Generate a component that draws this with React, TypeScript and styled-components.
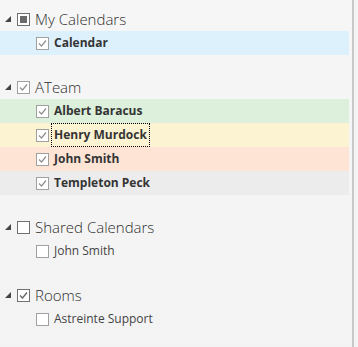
import styled, { createGlobalStyle } from 'styled-components';

type CheckState = 'checked' | 'partial' | 'empty';

interface CalendarItem {
  name: string;
  color?: string;
  bold?: boolean;
  focused?: boolean;
  state: CheckState;
}

interface CalendarGroup {
  title: string;
  state: CheckState;
  muted?: boolean;
  items: CalendarItem[];
}

const groups: CalendarGroup[] = [
  {
    title: 'My Calendars',
    state: 'partial',
    items: [{ name: 'Calendar', color: '#dcf1fc', bold: true, state: 'checked' }],
  },
  {
    title: 'ATeam',
    state: 'checked',
    muted: true,
    items: [
      { name: 'Albert Baracus', color: '#dcf0dc', bold: true, state: 'checked' },
      { name: 'Henry Murdock', color: '#fcf3d3', bold: true, focused: true, state: 'checked' },
      { name: 'John Smith', color: '#fde4d5', bold: true, state: 'checked' },
      { name: 'Templeton Peck', color: '#ececec', bold: true, state: 'checked' },
    ],
  },
  {
    title: 'Shared Calendars',
    state: 'empty',
    items: [{ name: 'John Smith', state: 'empty' }],
  },
  {
    title: 'Rooms',
    state: 'checked',
    items: [{ name: 'Astreinte Support', state: 'empty' }],
  },
];

const GlobalStyle = createGlobalStyle`
  body {
    margin: 0;
    background: #f4f4f4;
    font-family: 'Open Sans', 'Noto Sans', sans-serif;
  }
`;

const Pane = styled.div`
  width: 354px;
  height: 347px;
  box-sizing: border-box;
  border-right: 2px solid #c9c9c9;
  background: linear-gradient(#f6f6f6, #f3f3f3);
  display: flex;
  flex-direction: column;
  gap: 16px;
  padding-top: 7px;
`;

const Group = styled.div`
  display: flex;
  flex-direction: column;
  padding-bottom: 4px;
`;

const GroupHeader = styled.div`
  height: 24px;
  display: flex;
  align-items: center;
  padding-left: 5px;
`;

const Expander = styled.svg`
  width: 6px;
  height: 6px;
  margin-right: 6px;
  flex: none;
`;

const Box = styled.span<{ $muted?: boolean }>`
  width: 13px;
  height: 13px;
  box-sizing: border-box;
  border: 1px solid ${(p) => (p.$muted ? '#a0a0a0' : '#707070')};
  background: #fff;
  display: flex;
  align-items: center;
  justify-content: center;
  flex: none;
`;

const Partial = styled.span`
  width: 7px;
  height: 7px;
  background: #6a6a6a;
`;

const GroupTitle = styled.span`
  margin-left: 5px;
  font-size: 15px;
  font-weight: 300;
  color: #2e2e2e;
  white-space: nowrap;
`;

const Row = styled.div<{ $color?: string }>`
  height: 24px;
  margin-right: 3px;
  display: flex;
  align-items: center;
  padding-left: 36px;
  background: ${(p) => p.$color ?? 'transparent'};
`;

const ItemLabel = styled.span<{ $bold?: boolean; $focused?: boolean }>`
  margin-left: 2px;
  padding: 2px 2px 3px;
  font-size: 12px;
  font-weight: ${(p) => (p.$bold ? 700 : 400)};
  color: ${(p) => (p.$bold ? '#353535' : '#444')};
  border: 1px dotted ${(p) => (p.$focused ? '#000' : 'transparent')};
  white-space: nowrap;
`;

const CheckBox: React.FC<{ state: CheckState; muted?: boolean }> = ({ state, muted }) => (
  <Box $muted={muted}>
    {state === 'partial' && <Partial />}
    {state === 'checked' && (
      <svg width="11" height="11" viewBox="0 0 11 11">
        <path
          d="M2 5.5 L4.5 8 L9 2.5"
          fill="none"
          stroke={muted ? '#909090' : '#5e5e5e'}
          strokeWidth="1.2"
        />
      </svg>
    )}
  </Box>
);

const App = () => (
  <>
    <GlobalStyle />
    <Pane>
      {groups.map((g) => (
        <Group key={g.title}>
          <GroupHeader>
            <Expander viewBox="0 0 6 6">
              <polygon points="6,0 6,6 0,6" fill="#444" />
            </Expander>
            <CheckBox state={g.state} muted={g.muted} />
            <GroupTitle>{g.title}</GroupTitle>
          </GroupHeader>
          {g.items.map((it) => (
            <Row key={it.name} $color={it.color}>
              <CheckBox state={it.state} muted />
              <ItemLabel $bold={it.bold} $focused={it.focused}>
                {it.name}
              </ItemLabel>
            </Row>
          ))}
        </Group>
      ))}
    </Pane>
  </>
);

export default App;
